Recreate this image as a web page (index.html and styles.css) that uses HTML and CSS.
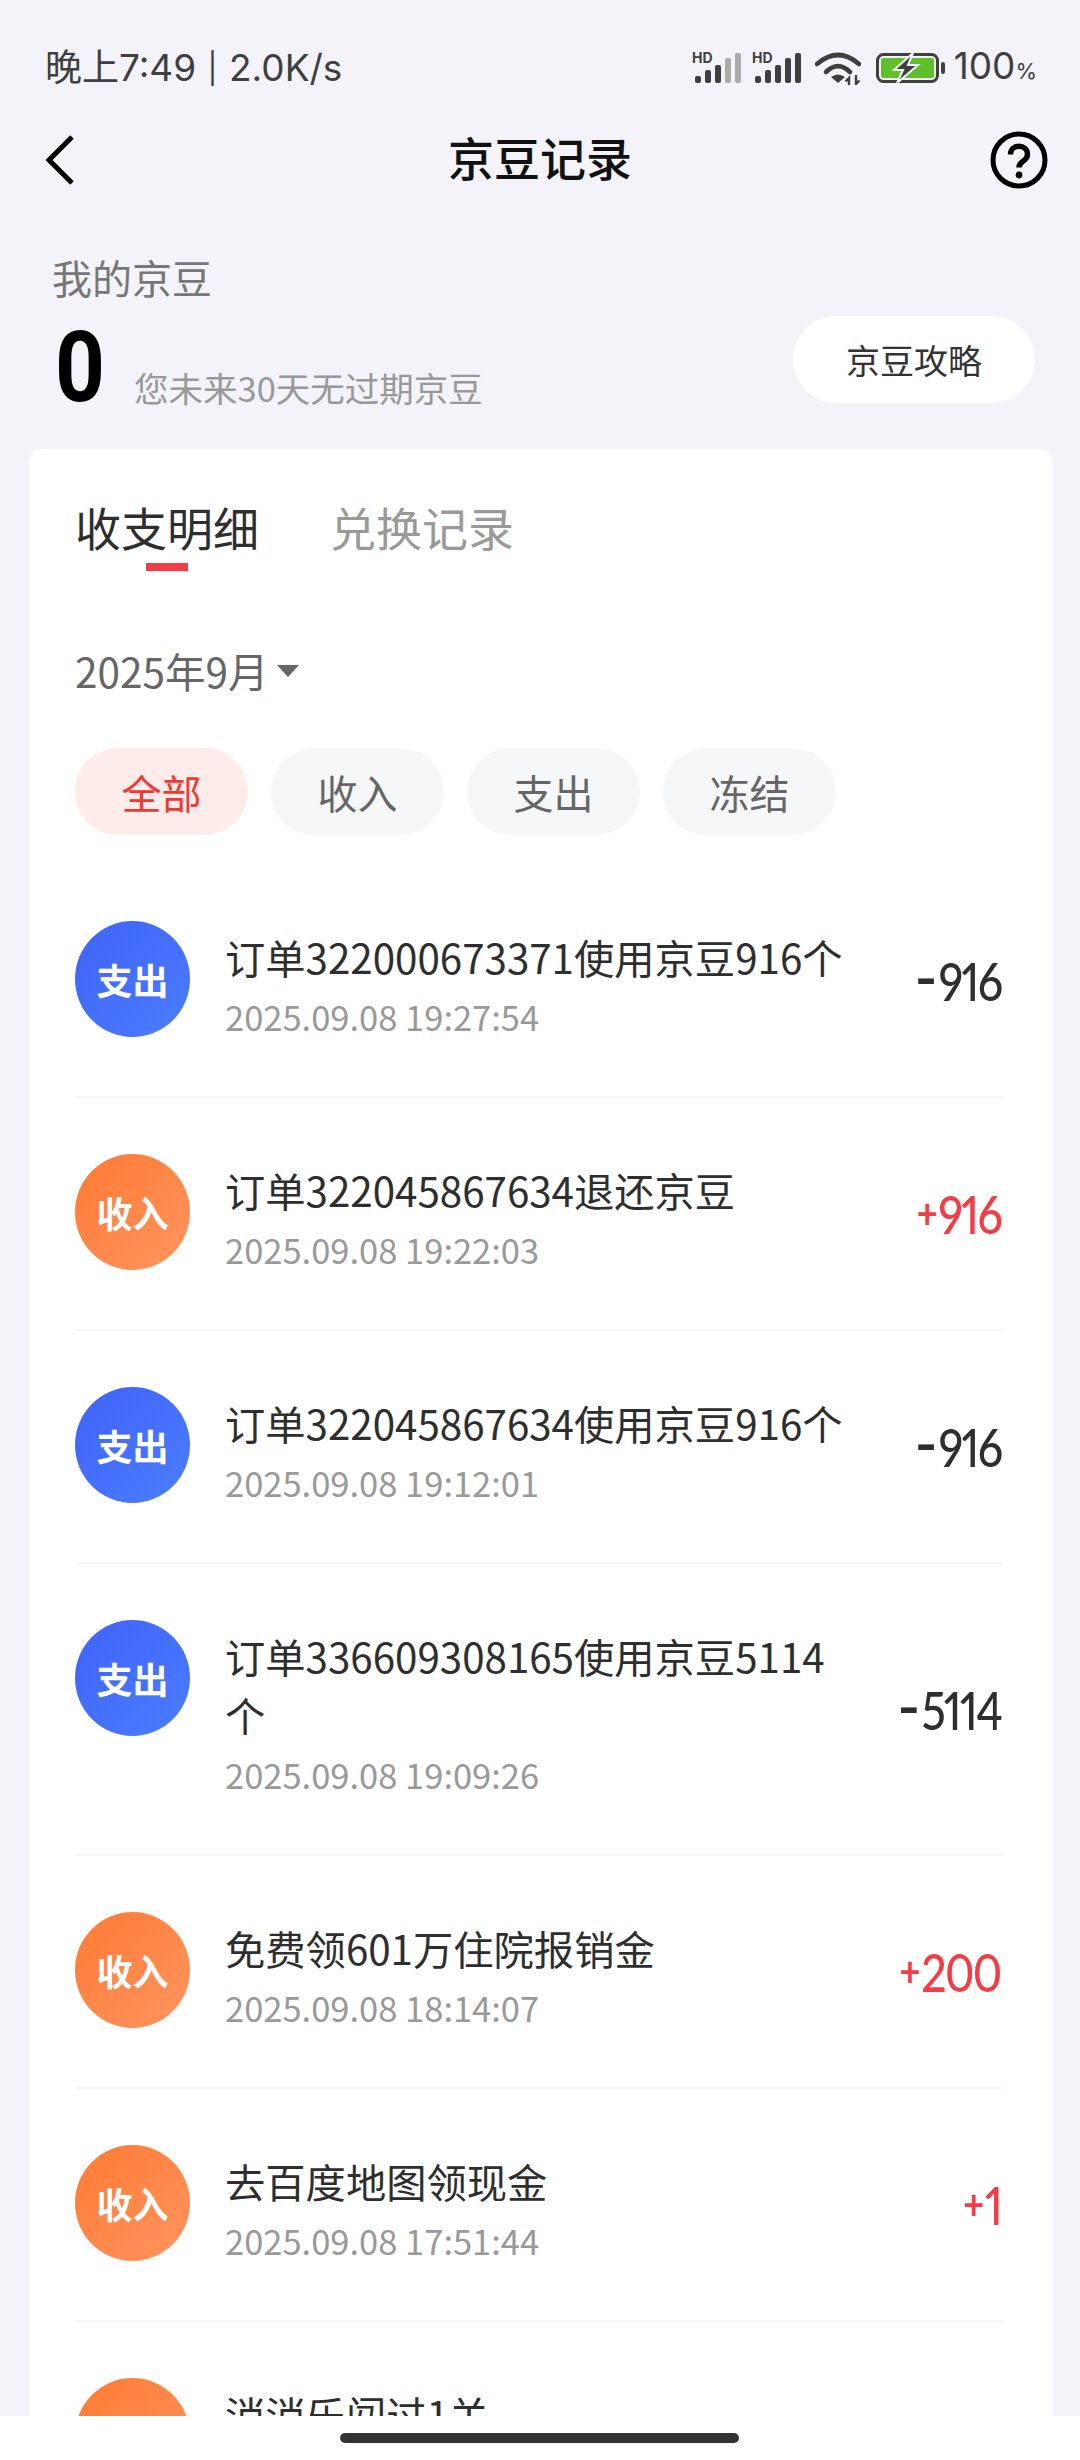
FILE: index.html
```html
<!DOCTYPE html>
<html lang="zh">
<head>
<meta charset="utf-8">
<title>京豆记录</title>
<link rel="stylesheet" href="styles.css">
</head>
<body>
<div class="screen">
  <div class="status">
    <div class="status-left">晚上7:49 <span class="sep">|</span> 2.0K/s</div>
    <div class="status-right">
      <svg class="sig" width="50" height="34" viewBox="0 0 50 34">
        <text x="0" y="12" class="hd">HD</text>
        <rect x="3" y="25" width="6" height="7" rx="2" fill="#3f3f3f"/>
        <rect x="13" y="19" width="6" height="13" rx="2" fill="#3f3f3f"/>
        <rect x="23" y="14" width="6" height="18" rx="2" fill="#3f3f3f"/>
        <rect x="33" y="7" width="6" height="25" rx="2" fill="#ababab"/>
        <rect x="43" y="2" width="6" height="30" rx="2" fill="#ababab"/>
      </svg>
      <svg class="sig" width="50" height="34" viewBox="0 0 50 34">
        <text x="0" y="12" class="hd">HD</text>
        <rect x="3" y="25" width="6" height="7" rx="2" fill="#3f3f3f"/>
        <rect x="13" y="19" width="6" height="13" rx="2" fill="#3f3f3f"/>
        <rect x="23" y="14" width="6" height="18" rx="2" fill="#3f3f3f"/>
        <rect x="33" y="7" width="6" height="25" rx="2" fill="#3f3f3f"/>
        <rect x="43" y="2" width="6" height="30" rx="2" fill="#3f3f3f"/>
      </svg>
      <svg class="wifi" width="46" height="34" viewBox="0 0 46 34">
        <path d="M2 13 Q23 -5 44 13" fill="none" stroke="#3f3f3f" stroke-width="4.6" stroke-linecap="round"/>
        <path d="M11 21 Q23 9 35 21" fill="none" stroke="#3f3f3f" stroke-width="4.6" stroke-linecap="round"/>
        <path d="M23 32 L16 26 Q23 21 30 26 Z" fill="#3f3f3f"/>
        <path d="M34 34V27l-3.500 3.500M41 24v9l3.500-3.500" fill="none" stroke="#3f3f3f" stroke-width="2.400"/>
      </svg>
      <svg class="batt" width="69" height="30" viewBox="0 0 69 30">
        <rect x="1.500" y="1.500" width="60" height="27" rx="6" fill="none" stroke="#3f3f3f" stroke-width="3"/>
        <rect x="5" y="5" width="53" height="20" rx="2" fill="#5fc02a"/>
        <rect x="65" y="9" width="4" height="12" rx="2" fill="#3f3f3f"/>
        <path d="M37 0 L18 17 H27 L21 30 L42 12 H32 Z" fill="#3f3f3f" stroke="#f3f3f9" stroke-width="2"/>
      </svg>
      <div class="pct">100<span class="pct-sign">%</span></div>
    </div>
  </div>

  <div class="nav">
    <svg class="back" width="30" height="50" viewBox="0 0 30 50"><path d="M27 2 L4 25 L27 48" fill="none" stroke="#000" stroke-width="5"/></svg>
    <div class="nav-title">京豆记录</div>
    <svg class="help" width="58" height="58" viewBox="0 0 58 58">
      <circle cx="29" cy="29" r="26" fill="none" stroke="#000" stroke-width="5"/>
      <path d="M20.500 23.500 C20.500 12.500 37.500 12.500 37.500 23.500 C37.500 30.500 29 29.500 29 36.500" fill="none" stroke="#000" stroke-width="5.400"/>
      <circle cx="29" cy="44" r="3.400" fill="#000"/>
    </svg>
  </div>

  <div class="summary">
    <div class="summary-label">我的京豆</div>
    <div class="summary-row">
      <div class="summary-num">0</div>
      <div class="summary-note">您未来30天无过期京豆</div>
      <div class="guide">京豆攻略</div>
    </div>
  </div>

  <div class="card">
    <div class="tabs">
      <div class="tab tab-on">收支明细</div>
      <div class="tab">兑换记录</div>
    </div>
    <div class="month"><span>2025年9月</span><i class="caret"></i></div>
    <div class="filters">
      <div class="chip chip-on">全部</div>
      <div class="chip">收入</div>
      <div class="chip">支出</div>
      <div class="chip">冻结</div>
    </div>
    <div class="list">
      <div class="row">
        <div class="badge out">支出</div>
        <div class="info"><div class="title">订单322000673371使用京豆916个</div><div class="time">2025.09.08 19:27:54</div></div>
        <div class="amt"><span class="minus">-</span>916</div>
      </div>
      <div class="row">
        <div class="badge in">收入</div>
        <div class="info"><div class="title">订单322045867634退还京豆</div><div class="time">2025.09.08 19:22:03</div></div>
        <div class="amt amt-in"><span class="plus">+</span>916</div>
      </div>
      <div class="row">
        <div class="badge out">支出</div>
        <div class="info"><div class="title">订单322045867634使用京豆916个</div><div class="time">2025.09.08 19:12:01</div></div>
        <div class="amt"><span class="minus">-</span>916</div>
      </div>
      <div class="row">
        <div class="badge out">支出</div>
        <div class="info"><div class="title">订单336609308165使用京豆5114个</div><div class="time">2025.09.08 19:09:26</div></div>
        <div class="amt"><span class="minus">-</span>5114</div>
      </div>
      <div class="row">
        <div class="badge in">收入</div>
        <div class="info"><div class="title">免费领601万住院报销金</div><div class="time">2025.09.08 18:14:07</div></div>
        <div class="amt amt-in"><span class="plus">+</span>200</div>
      </div>
      <div class="row">
        <div class="badge in">收入</div>
        <div class="info"><div class="title">去百度地图领现金</div><div class="time">2025.09.08 17:51:44</div></div>
        <div class="amt amt-in"><span class="plus">+</span>1</div>
      </div>
      <div class="row">
        <div class="badge in">收入</div>
        <div class="info"><div class="title">消消乐闯过1关</div></div>
      </div>
    </div>
  </div>
  <div class="home-bar"><div class="home-pill"></div></div>
</div>
</body>
</html>
```

FILE: styles.css
```css
* { box-sizing: border-box; }
html, body { margin: 0; padding: 0; }
body { width: 1080px; height: 2460px; overflow: hidden; background: #f3f3f9; font-family: "Noto Sans CJK SC", "Noto Sans", sans-serif; }
.screen { position: relative; width: 1080px; height: 2460px; overflow: hidden; display: flex; flex-direction: column; }

.status { height: 70px; margin-top: 33px; padding: 0 43px 0 45px; display: flex; justify-content: space-between; align-items: center; color: #3f3f3f; }
.status-left { font-size: 37px; line-height: 44px; white-space: nowrap; font-family: "Inter", "Noto Sans CJK SC", sans-serif; }
.sep { font-size: 30px; line-height: 1; vertical-align: 2px; margin: 0 1px; }
.status-right { display: flex; align-items: center; }
.sig { margin-right: 10px; overflow: visible; }
.hd { font: 700 14px "Inter", sans-serif; fill: #3f3f3f; }
.wifi { margin-left: 3px; margin-right: 15px; }
.batt { margin-right: 9px; }
.pct { font: 400 37px/44px "Inter", sans-serif; color: #3f3f3f; }
.pct-sign { font-size: 22px; }

.nav { height: 113px; padding: 0 32px 0 45px; display: flex; align-items: center; justify-content: space-between; position: relative; }
.nav-title { position: absolute; left: 0; right: 0; top: 23px; text-align: center; font-size: 46px; font-weight: 500; color: #111; line-height: 60px; }
.back, .help { position: relative; }

.summary { padding: 36px 45px 0 52px; height: 233px; }
.summary-label { font-size: 40px; line-height: 50px; color: #777; }
.summary-row { display: flex; align-items: flex-end; height: 95px; margin-top: 14px; }
.summary-num { font: 700 99px/87px "Roboto", sans-serif; color: #000; width: 79px; margin-left: 3px; transform: scaleX(0.88); transform-origin: left center; }
.summary-note { font-size: 34.500px; line-height: 44px; color: #999; margin-bottom: 2px; }
.guide { margin-left: auto; align-self: flex-start; width: 242px; height: 87px; border-radius: 44px; background: #fff; color: #333; font-size: 34px; display: flex; align-items: center; justify-content: center; }

.card { flex: 1; margin: 0 28px 0 29px; background: #fff; border-radius: 12px 12px 0 0; padding: 44px 0 0 46px; overflow: hidden; }
.tabs { display: flex; gap: 71px; height: 69px; }
.tab { font-size: 46px; line-height: 66px; color: #999; position: relative; height: 69px; }
.tab-on { color: #2e2e2e; }
.tab-on::after { content: ""; position: absolute; left: 50%; bottom: -9px; margin-left: -21px; width: 42px; height: 8px; background: #f23d47; }
.month { margin-top: 81px; height: 60px; display: flex; align-items: center; font-size: 40.500px; color: #666; }
.month span { margin-bottom: 6px; }
.caret { margin-left: 9px; margin-bottom: 4px; width: 0; height: 0; border: 11px solid transparent; border-top: 12px solid #666; border-bottom: 0; }
.filters { display: flex; gap: 23px; margin-top: 45px; }
.chip { width: 173px; height: 87px; border-radius: 44px; background: #f6f7f9; color: #666; font-size: 40px; display: flex; align-items: center; justify-content: center; }
.chip-on { background: #fdecea; color: #ee3a33; }

.list { margin-top: 30px; }
.row { display: flex; align-items: flex-start; padding: 56px 3px 55px 0; width: 929px; border-bottom: 2px solid #f5f5f6; }
.badge { width: 115px; height: 116px; border-radius: 50%; color: #fff; font-size: 36px; font-weight: 700; display: flex; align-items: center; justify-content: center; flex-shrink: 0; }
.out { background: linear-gradient(135deg, #3f63f7, #4a7dff); }
.in { background: linear-gradient(135deg, #ff7a33, #ff9560); }
.info { margin: 6px 0 0 35px; width: 632px; }
.title { font-size: 40.300px; line-height: 59px; color: #2e2e2e; }
.time { font-size: 34.500px; line-height: 50px; color: #999; margin-top: 5px; }
.amt { margin-left: auto; align-self: center; white-space: nowrap; font: 500 52px/60px "Lato", "Noto Sans", sans-serif; font-variant-numeric: proportional-nums; letter-spacing: -2px; color: #2e2e2e; transform: scaleX(0.86); transform-origin: right center; }
.plus { font-size: 42px; font-weight: 700; line-height: 0; vertical-align: 5px; margin-right: 3px; }
.minus { font-size: 74px; font-weight: 400; line-height: 0; vertical-align: -2px; margin-right: 3px; }
.amt-in { color: #f23d47; }

.home-bar { position: absolute; left: 0; right: 0; bottom: 0; height: 44px; background: #fff; }
.home-pill { position: absolute; left: 340px; top: 17px; width: 399px; height: 10px; border-radius: 5px; background: #333; }
```
